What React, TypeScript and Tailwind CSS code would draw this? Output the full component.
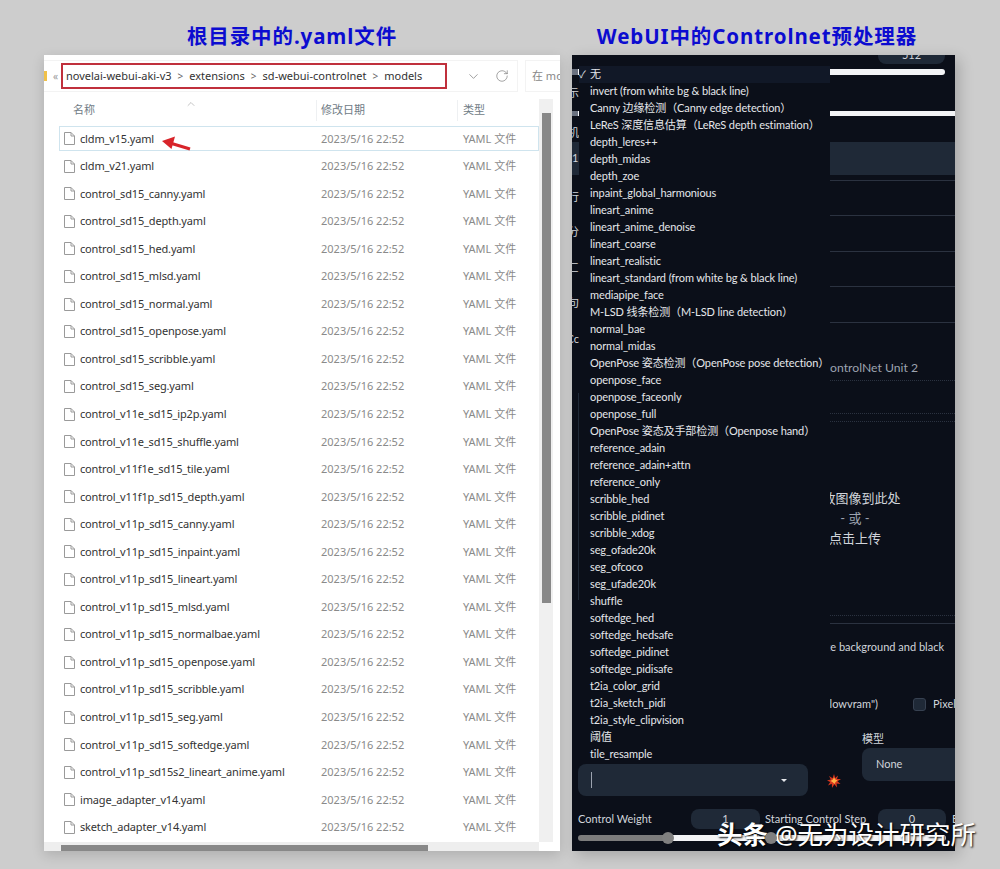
import React from 'react';
import { ChevronDown, ChevronUp, RotateCw } from 'lucide-react';

const yamlFiles = [
  'cldm_v15.yaml', 'cldm_v21.yaml', 'control_sd15_canny.yaml', 'control_sd15_depth.yaml', 'control_sd15_hed.yaml',
  'control_sd15_mlsd.yaml', 'control_sd15_normal.yaml', 'control_sd15_openpose.yaml', 'control_sd15_scribble.yaml',
  'control_sd15_seg.yaml', 'control_v11e_sd15_ip2p.yaml', 'control_v11e_sd15_shuffle.yaml', 'control_v11f1e_sd15_tile.yaml',
  'control_v11f1p_sd15_depth.yaml', 'control_v11p_sd15_canny.yaml', 'control_v11p_sd15_inpaint.yaml',
  'control_v11p_sd15_lineart.yaml', 'control_v11p_sd15_mlsd.yaml', 'control_v11p_sd15_normalbae.yaml',
  'control_v11p_sd15_openpose.yaml', 'control_v11p_sd15_scribble.yaml', 'control_v11p_sd15_seg.yaml',
  'control_v11p_sd15_softedge.yaml', 'control_v11p_sd15s2_lineart_anime.yaml', 'image_adapter_v14.yaml', 'sketch_adapter_v14.yaml',
];

const preprocessors = [
  '无', 'invert (from white bg & black line)', 'Canny 边缘检测（Canny edge detection）', 'LeReS 深度信息估算（LeReS depth estimation）',
  'depth_leres++', 'depth_midas', 'depth_zoe', 'inpaint_global_harmonious', 'lineart_anime', 'lineart_anime_denoise', 'lineart_coarse',
  'lineart_realistic', 'lineart_standard (from white bg & black line)', 'mediapipe_face', 'M-LSD 线条检测（M-LSD line detection）',
  'normal_bae', 'normal_midas', 'OpenPose 姿态检测（OpenPose pose detection）', 'openpose_face', 'openpose_faceonly', 'openpose_full',
  'OpenPose 姿态及手部检测（Openpose hand）', 'reference_adain', 'reference_adain+attn', 'reference_only', 'scribble_hed',
  'scribble_pidinet', 'scribble_xdog', 'seg_ofade20k', 'seg_ofcoco', 'seg_ufade20k', 'shuffle', 'softedge_hed', 'softedge_hedsafe',
  'softedge_pidinet', 'softedge_pidisafe', 't2ia_color_grid', 't2ia_sketch_pidi', 't2ia_style_clipvision', '阈值', 'tile_resample',
];

const FileIcon = () => (
  <svg width="11" height="13" viewBox="0 0 11 13" fill="none" stroke="#9a9a9a" strokeWidth="1" className="shrink-0">
    <path d="M0.5 0.5H7L10.5 4V12.5H0.5Z" fill="#fff" />
    <path d="M7 0.5V4H10.5" />
  </svg>
);

const Slash = () => <span className="mx-[6px] text-[#666] text-[10px]">&gt;</span>;

const Explorer = () => (
  <div className="relative flex h-[796px] w-[516px] flex-col bg-white text-[11px] shadow-[0_4px_12px_rgba(0,0,0,0.15)]">
    {/* toolbar */}
    <div className="flex h-[44px] shrink-0 pt-[5px]">
      <div className="flex h-[32px] w-[474px] items-center border border-[#f3f3f3] border-l-0">
        <div className="h-[10px] w-[3px] bg-[#f0c14a]" />
        <span className="ml-[6px] w-[8px] text-[10px] text-[#999]">«</span>
        <div className="flex h-[26px] w-[386px] items-center border-2 border-[#c0303c] pl-[3px] text-[#333] whitespace-nowrap">
          novelai-webui-aki-v3<Slash />extensions<Slash />sd-webui-controlnet<Slash />models
        </div>
        <ChevronDown size={15} strokeWidth={1} className="ml-[19px] text-[#666]" />
        <RotateCw size={14} strokeWidth={1} className="ml-[14px] text-[#666]" />
      </div>
      <div className="ml-[7px] flex h-[32px] flex-1 items-center overflow-hidden border border-r-0 border-[#f3f3f3] pl-[6px] text-[#888] whitespace-nowrap">
        在 models
      </div>
    </div>
    {/* list + vertical scrollbar */}
    <div className="flex min-h-0 flex-1">
      <div className="w-[495px]">
        <div className="relative flex h-[26px] pl-[29px] pt-[1px] text-[#6f7b85]">
          <div className="flex h-[21px] w-[243px] items-center">名称</div>
          <ChevronUp size={12} strokeWidth={1} className="absolute left-[141px] -top-[1px] text-[#888]" />
          <div className="flex h-[21px] w-[141px] items-center border-l border-[#eef0f2] pl-[4px]">修改日期</div>
          <div className="flex h-[21px] items-center border-l border-[#eef0f2] pl-[5px]">类型</div>
        </div>
        {yamlFiles.map((name, i) => (
          <div key={name} className="flex h-[27.56px] items-center pl-[15px]">
            <div className={`flex h-[25px] w-[480px] items-center border pl-[4px] ${i === 0 ? 'border-[#cfe4ee]' : 'border-transparent'}`}>
              <FileIcon />
              <span className="ml-[5px] w-[241px] tracking-[-0.16px] text-[#333]">{name}</span>
              <span className="w-[142px] text-[#8a8a8a]">2023/5/16 22:52</span>
              <span className="text-[#8a8a8a]">YAML 文件</span>
            </div>
          </div>
        ))}
      </div>
      <div className="w-[14px] bg-[#f0f0f0] pl-[3px] pt-[14px]">
        <div className="h-[490px] w-[9px] bg-[#888]" />
      </div>
    </div>
    {/* horizontal scrollbar */}
    <div className="mr-[21px] h-[9px] shrink-0 bg-[#eeeeee] pl-[17px] pt-[3px]">
      <div className="h-[6px] w-[367px] bg-[#888]" />
    </div>
    <svg width="32" height="20" viewBox="0 0 32 20" className="absolute left-[116px] top-[79px]">
      <path d="M2 7L15 2.5L11.5 15Z" fill="#d8242a" />
      <path d="M10 9L30 15" stroke="#d8242a" strokeWidth="3" />
    </svg>
  </div>
);

const StripRow = ({ label, className, children }: { label?: string; className?: string; children?: React.ReactNode }) => (
  <div className="flex">
    <div className="flex w-[7px] justify-end overflow-hidden pt-[9px] text-[11px] leading-[14px] text-[#d1d5db] whitespace-nowrap">{label}</div>
    <div className={`flex-1 border-b border-[#2b3240] ${className}`}>{children}</div>
  </div>
);

const Slider = ({ fill, width }: { fill: number; width: string }) => (
  <div className={`flex h-[6px] items-center ${width}`}>
    <div className="h-[6px] shrink-0 rounded-l-full bg-[#7c7c7c]" style={{ width: fill }} />
    <div className="relative z-10 -mx-[6px] h-[12px] w-[12px] shrink-0 rounded-full bg-[#808080]" />
    <div className="h-[6px] flex-1 rounded-r-full bg-[#f3f4f6]" />
  </div>
);

const Burst = () => (
  <svg width="14" height="14" viewBox="0 0 14 14" className="shrink-0">
    <path d="M7 0L8.2 4L11 1.5L10 5L14 5L10.5 7.2L13.5 10L9.6 9.4L10 13.5L7.4 10.2L5 14L4.8 9.8L1 11.5L3.2 8L0 6.5L3.8 5.6L2 2L5.6 4.2Z" fill="#d9381e" />
    <path d="M7 3.5L8.4 5.6L10.5 6.5L8.6 8L7.4 10L5.8 8.2L3.6 7L5.8 5.6Z" fill="#ffb347" />
  </svg>
);

const Webui = () => (
  <div className="relative h-[796px] w-[383px] overflow-hidden bg-[#0b0f19] font-['Lato','Noto_Sans_CJK_SC',sans-serif] text-[11px] text-[#d1d5db] shadow-[4px_4px_14px_rgba(0,0,0,0.2)]">
    {/* settings behind the open dropdown */}
    <div className="flex h-[9px] justify-end pr-[10px]">
      <div className="h-[9px] w-[67px] overflow-hidden rounded-b-lg bg-[#1f2937] text-center leading-[0px]">512</div>
    </div>
    <div className="mt-[5px] mr-[10px] flex h-[6px]">
      <div className="w-[6px] bg-[#6b7280]" />
      <div className="flex-1 rounded-r-full bg-[#f3f4f6]" />
    </div>
    <div className="flex h-[36px] w-[7px] items-center justify-end overflow-hidden whitespace-nowrap">示</div>
    <div className="flex h-[5px]">
      <div className="w-[6px] bg-[#6b7280]" />
      <div className="flex-1 bg-[#f3f4f6]" />
    </div>
    <div className="flex h-[26px] w-[7px] items-end justify-end overflow-hidden pb-[1px] whitespace-nowrap">机</div>
    <div className="flex h-[33px] items-center bg-[#1f2937]">1</div>
    <div className="ml-[7px] h-[6px] border-b border-[#2b3240]" />
    <StripRow label="行" className="h-[35px]" />
    <StripRow label="分" className="h-[36px]" />
    <StripRow label="匚" className="h-[35px]" />
    <StripRow label="句" className="h-[36px]" />
    <StripRow label="Cc" className="flex h-[58px] flex-col items-end justify-end border-dotted pr-[37px] pb-[4px]">
      <span className="text-[12.2px] leading-[16px] text-[#9ca3af] whitespace-nowrap">ControlNet Unit 2</span>
    </StripRow>
    <div className="flex h-[243px]">
      <div className="w-[7px] shrink-0 pt-[12px] pb-[24px]">
        <div className="h-full border-r border-[#1f2937]" />
      </div>
      <div className="flex-1">
        <div className="h-[33px] border-b border-dotted border-[#2b3240]" />
        <div className="h-[8px] border-b border-dotted border-[#2b3240]" />
        <div className="flex h-[194px] flex-col items-end justify-center border-b border-dotted border-[#2b3240] pr-[53px] pb-[2px] text-[13px] leading-[20px]">
          <span className="w-[94px] text-center whitespace-nowrap">拖放图像到此处</span>
          <span className="w-[94px] text-center text-[#9ca3af]">- 或 -</span>
          <span className="w-[94px] text-center whitespace-nowrap">点击上传</span>
        </div>
        <div className="h-[8px] border-b border-[#2b3240]" />
      </div>
    </div>
    <div className="flex h-[46px] items-center justify-end pr-[11px] whitespace-nowrap">Invert (from white background and black</div>
    <div className="mt-[20px] flex h-[28px] items-center whitespace-nowrap">
      <div className="flex w-[306px] shrink-0 justify-end">Low VRAM ("lowvram")</div>
      <div className="ml-[35px] h-[13px] w-[13px] shrink-0 rounded-[3px] border border-[#374151] bg-[#1f2937]" />
      <span className="ml-[7px]">Pixel Perfect</span>
    </div>
    <div className="mt-[12px] flex h-[66px] pl-[6px]">
      <div className="mt-[34px] flex h-[32px] w-[230px] shrink-0 items-center justify-between rounded-lg bg-[#1f2937] pl-[13px] pr-[21px]">
        <div className="h-[16px] w-px bg-[#9ca3af]" />
        <div className="h-0 w-0 border-x-[3px] border-t-[3px] border-x-transparent border-t-[#e5e7eb]" />
      </div>
      <div className="ml-[19px] mt-[44px]"><Burst /></div>
      <div className="ml-[21px] w-[120px] shrink-0">
        <div className="h-[18px] leading-[18px]">模型</div>
        <div className="flex h-[33px] items-center rounded-lg bg-[#1f2937] pl-[14px]">None</div>
      </div>
    </div>
    <div className="mt-[13px] flex h-[20px] items-center pl-[6px] whitespace-nowrap">
      <span className="w-[113px] shrink-0">Control Weight</span>
      <div className="h-[20px] w-[69px] shrink-0 rounded-lg bg-[#1f2937] text-center leading-[20px]">1</div>
      <span className="ml-[5px] w-[113px] shrink-0">Starting Control Step</span>
      <div className="h-[20px] w-[68px] shrink-0 rounded-lg bg-[#1f2937] text-center leading-[20px]">0</div>
      <span className="ml-[6px]">Ending</span>
    </div>
    <div className="mt-[6px] flex pl-[6px]">
      <Slider fill={90} width="w-[182px]" />
      <div className="ml-[5px]"><Slider fill={6} width="w-[181px]" /></div>
    </div>
    {/* open dropdown list */}
    <ul className="absolute left-[7px] top-[11px] w-[251px] bg-[#0b0f19] tracking-[-0.1px] text-[#e5e7eb]">
      {preprocessors.map((item, i) => (
        <li key={item} className={`flex h-[17.03px] items-center pb-[1px] whitespace-nowrap ${i === 0 ? 'bg-[#111827]' : ''}`}>
          <span className="w-[11px] shrink-0 text-[10px]">{i === 0 ? '✓' : ''}</span>
          <span>{item}</span>
        </li>
      ))}
    </ul>
  </div>
);

export default function App() {
  return (
    <div className="relative flex h-[869px] w-[1000px] overflow-hidden bg-[#cdcdcd] pl-[44px] font-['Noto_Sans','Noto_Sans_CJK_SC',sans-serif]">
      <div>
        <h2 className="flex h-[55px] items-center justify-center pr-[20px] pt-[17px] text-[20.5px] font-bold tracking-[0.9px] text-[#0c0cd0]">
          根目录中的.yaml文件
        </h2>
        <Explorer />
      </div>
      <div className="ml-[12px]">
        <h2 className="flex h-[55px] items-center justify-center pr-[13px] pt-[17px] text-[20.5px] font-bold tracking-[0.9px] text-[#0c0cd0] whitespace-nowrap">
          WebUI中的Controlnet预处理器
        </h2>
        <Webui />
      </div>
      <div className="absolute left-[717px] top-[816px] text-[25.5px] leading-[36px] text-white [text-shadow:1px_1px_2px_#000] whitespace-nowrap">
        <span className="font-bold">头条</span> @无为设计研究所
      </div>
    </div>
  );
}
